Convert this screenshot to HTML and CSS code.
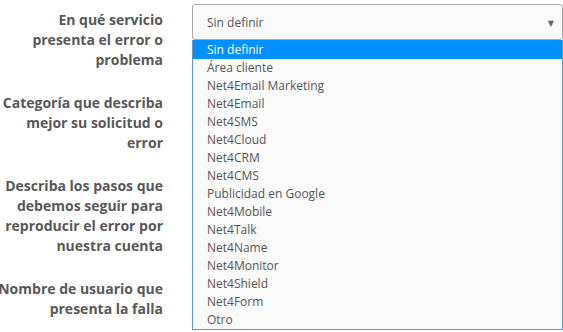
FILE: index.html
```html
<!DOCTYPE html>
<html lang="es">
<head>
<meta charset="utf-8">
<link rel="stylesheet" href="styles.css">
</head>
<body>
<form class="form">
  <div class="row">
    <label class="label">En qué servicio presenta el error o problema</label>
    <div class="control">
      <div class="select">
        <span class="select-value">Sin definir</span>
        <span class="arrow">▼</span>
      </div>
      <ul class="dropdown">
        <li class="opt selected">Sin definir</li>
        <li class="opt">Área cliente</li>
        <li class="opt">Net4Email Marketing</li>
        <li class="opt">Net4Email</li>
        <li class="opt">Net4SMS</li>
        <li class="opt">Net4Cloud</li>
        <li class="opt">Net4CRM</li>
        <li class="opt">Net4CMS</li>
        <li class="opt">Publicidad en Google</li>
        <li class="opt">Net4Mobile</li>
        <li class="opt">Net4Talk</li>
        <li class="opt">Net4Name</li>
        <li class="opt">Net4Monitor</li>
        <li class="opt">Net4Shield</li>
        <li class="opt">Net4Form</li>
        <li class="opt">Otro</li>
      </ul>
    </div>
  </div>
  <div class="row">
    <label class="label">Categoría que describa mejor su solicitud o error</label>
    <div class="control"></div>
  </div>
  <div class="row">
    <label class="label">Describa los pasos que debemos seguir para reproducir el error por nuestra cuenta</label>
    <div class="control"></div>
  </div>
  <div class="row">
    <label class="label">Nombre de usuario que presenta la falla</label>
    <div class="control"></div>
  </div>
</form>
</body>
</html>
```

FILE: styles.css
```css
html, body {
  margin: 0;
  padding: 0;
  background: #ffffff;
}
body {
  font-family: "Open Sans", "DejaVu Sans", sans-serif;
  color: #555555;
  width: 563px;
  height: 332px;
  overflow: hidden;
}
.form {
  display: flex;
  flex-direction: column;
  gap: 22px;
  padding-top: 10px;
  margin-left: -4px;
}
.row {
  display: grid;
  grid-template-columns: 167px 1fr;
  column-gap: 29px;
}
.label {
  font-size: 14px;
  font-weight: 700;
  line-height: 20px;
  text-align: right;
  color: #585858;
  padding-bottom: 1px;
}
.control {
  position: relative;
}
.select {
  margin-top: -6px;
  height: 36px;
  box-sizing: border-box;
  border: 1px solid #a9a9a9;
  border-radius: 3px;
  background: #fafafa;
  display: flex;
  align-items: center;
  justify-content: space-between;
  padding: 0 8px 0 14px;
  font-size: 12px;
  color: #555555;
}
.arrow {
  font-size: 8px;
  color: #666666;
}
.dropdown {
  position: absolute;
  left: 0;
  right: 0;
  top: 30px;
  margin: 0;
  padding: 0;
  list-style: none;
  background: #fafafa;
  border: 1px solid #5b9bd5;
  border-top: none;
  z-index: 2;
}
.opt {
  height: 18px;
  line-height: 18px;
  padding-left: 14px;
  font-size: 12px;
  color: #555555;
}
.opt.selected {
  background: #0090ff;
  color: #ffffff;
  height: 19px;
  line-height: 19px;
}
```
